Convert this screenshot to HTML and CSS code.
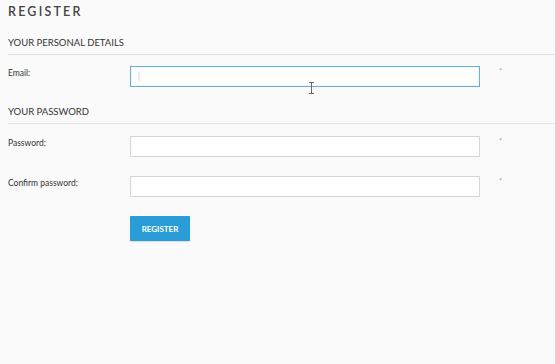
FILE: index.html
```html
<!DOCTYPE html>
<html>
<head>
<meta charset="utf-8">
<link rel="stylesheet" href="styles.css">
</head>
<body>
<div class="page">
  <h1 class="title">REGISTER</h1>
  <h2 class="section">YOUR PERSONAL DETAILS</h2>
  <div class="rows first">
    <div class="row">
      <label class="label">Email:</label>
      <div class="input focus"><span class="caret"></span></div>
      <span class="req">*</span>
    </div>
  </div>
  <h2 class="section">YOUR PASSWORD</h2>
  <div class="rows">
    <div class="row">
      <label class="label">Password:</label>
      <div class="input"></div>
      <span class="req">*</span>
    </div>
    <div class="row">
      <label class="label">Confirm password:</label>
      <div class="input"></div>
      <span class="req">*</span>
    </div>
    <div class="row">
      <span class="label"></span>
      <button class="btn">REGISTER</button>
    </div>
  </div>
</div>
<svg class="ibeam" width="7" height="12" viewBox="0 0 7 12"><path d="M1 0.5h5M1 11.5h5M3.5 0.5v11" stroke="#666" stroke-width="1" fill="none"/></svg>
</body>
</html>
```
FILE: styles.css
```css
html, body { margin: 0; padding: 0; }
body {
  background: #fafafa;
  font-family: Lato, "Open Sans", sans-serif;
  color: #333;
  width: 555px;
  height: 364px;
  position: relative;
  overflow: hidden;
}
.page { padding: 4px 0 0 8px; }
.title {
  margin: 0;
  font-size: 12.5px;
  font-weight: 600;
  letter-spacing: 2.2px;
  color: #444;
  line-height: 15px;
}
.section {
  margin: 18px 0 0 0;
  font-size: 9.5px;
  font-weight: 400;
  color: #333;
  line-height: 12px;
  padding-bottom: 5px;
  border-bottom: 1px solid #e2e2e2;
}
.rows { display: flex; flex-direction: column; gap: 19px; padding: 12px 0 0 0; }
.rows.first { padding: 11px 0 1px 0; }
.row { display: flex; align-items: flex-start; }
.label {
  width: 122px;
  font-size: 8.5px;
  line-height: 12px;
  padding-top: 1px;
  color: #333;
}
.input {
  width: 348px;
  height: 19px;
  border: 1px solid #d6d6d6;
  background: #fff;
  position: relative;
}
.input.focus {
  border-color: #6aaed8;
  box-shadow: inset 0 0 2px rgba(100,170,220,0.35);
}
.caret {
  position: absolute;
  left: 7px;
  top: 5px;
  width: 2px;
  height: 9px;
  background: #ececec;
}
.req {
  margin-left: 19px;
  color: #e58a8a;
  font-size: 8px;
  line-height: 8px;
  padding-top: 1px;
}
.btn {
  width: 60px;
  height: 25px;
  border: 0;
  border-radius: 1px;
  background: #2a9dd8;
  color: #fff;
  font-family: Lato, sans-serif;
  font-size: 8px;
  font-weight: 700;
  padding: 0;
  box-shadow: 0 1px 1px rgba(0,0,0,0.12);
}
.ibeam { position: absolute; left: 308px; top: 82px; }
```
